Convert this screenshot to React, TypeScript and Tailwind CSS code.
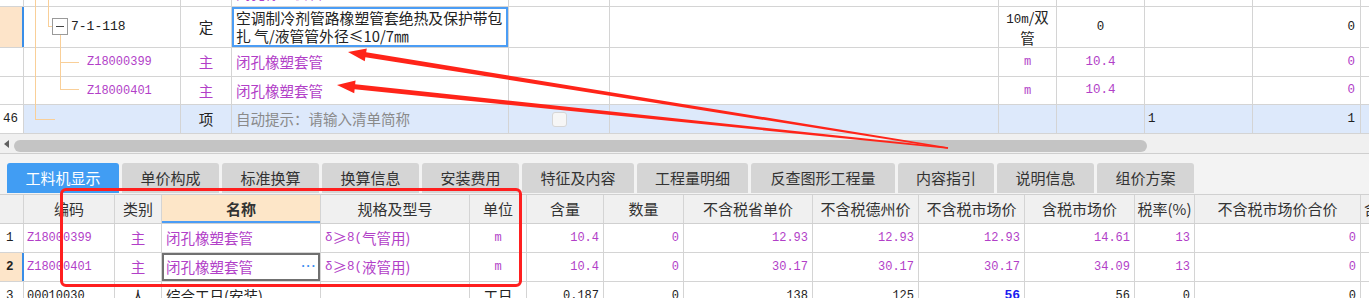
import React from "react";

const P = "text-[#b23fc8]";
const MONO = "font-['Liberation_Mono','Noto_Sans_CJK_SC',monospace]";
const CJK = "font-['Noto_Sans_CJK_SC','Noto_Sans',sans-serif]";

type CP = { w: string; cls?: string; children?: React.ReactNode };
function C({ w, cls = "", children }: CP) {
  return (
    <div
      className={`${w} shrink-0 h-full border-r border-[#d4d4d4] flex items-center overflow-hidden whitespace-nowrap ${cls}`}
    >
      {children}
    </div>
  );
}

const numR = `justify-end pr-[4px] ${MONO} text-[12px]`;
const numRTop = `justify-end pr-[5px] ${MONO} text-[12.5px]`;
const numCTop = `justify-center ${MONO} text-[12.5px]`;

function TreeLines() {
  const c = "#f9cf98";
  return (
    <svg className="absolute left-0 top-0 pointer-events-none" width="200" height="134">
      <line x1="35.5" y1="0" x2="35.5" y2="119.5" stroke={c} strokeWidth="1" />
      <line x1="35" y1="119.5" x2="55" y2="119.5" stroke={c} strokeWidth="1" />
      <line x1="48.5" y1="0" x2="48.5" y2="26.5" stroke={c} strokeWidth="1" />
      <line x1="48" y1="26.5" x2="52" y2="26.5" stroke={c} strokeWidth="1" />
      <rect x="52.5" y="18.5" width="15" height="16" fill="#fff" stroke="#9a9a9a" strokeWidth="1" />
      <line x1="56" y1="26.5" x2="64" y2="26.5" stroke="#444" strokeWidth="1" />
      <line x1="60.5" y1="35" x2="60.5" y2="89.5" stroke={c} strokeWidth="1" />
      <line x1="60" y1="62.5" x2="79" y2="62.5" stroke={c} strokeWidth="1" />
      <line x1="60" y1="89.5" x2="79" y2="89.5" stroke={c} strokeWidth="1" />
    </svg>
  );
}

function TopGrid() {
  return (
    <div className="relative">
      {/* partial row above */}
      <div className="h-[7px] border-b border-[#d4d4d4] overflow-hidden flex flex-col justify-end">
        <div className="h-[27px] shrink-0 flex">
          <C w="w-[24px]" />
          <C w="w-[157px]" />
          <C w="w-[51px]" cls={`justify-center text-[14.5px] ${P}`}>主</C>
          <C w="w-[277px]" cls={`pl-[4px] text-[14.5px] ${P}`}>闭孔橡塑套管</C>
          <C w="w-[101px]" />
          <C w="w-[389px]" />
          <C w="w-[58px]" cls={`justify-center ${MONO} text-[12px] ${P}`}>m</C>
          <C w="w-[88px]" cls={`${numCTop} ${P}`}>10.4</C>
          <C w="w-[108px]" />
          <C w="w-[108px]" cls={`${numRTop} ${P}`}>0</C>
          <div className="flex-1" />
        </div>
      </div>

      {/* 7-1-118 */}
      <div className="h-[41px] border-b border-[#d4d4d4] flex text-[#222]">
        <div className="w-[24px] shrink-0 h-full bg-[#fde4c9] border-r-2 border-[#3a8ee8]" />
        <C w="w-[157px]" cls={`pl-[47px] ${MONO} text-[13px]`}>7-1-118</C>
        <C w="w-[51px]" cls="justify-center text-[14.5px]">定</C>
        <C w="w-[277px]" cls="pl-[4px] shadow-[inset_0_0_0_2px_#4b9df5]">
          <div className="text-[14.8px] leading-[18px] whitespace-normal">
            空调制冷剂管路橡塑管套绝热及保护带包
            <br />
            扎 气/液管管外径≤10/7㎜
          </div>
        </C>
        <C w="w-[101px]" />
        <C w="w-[389px]" />
        <C w="w-[58px]" cls="justify-center">
          <div className="text-[14.5px] leading-[18px] text-center">
            <span className={`${MONO} text-[12.5px]`}>10m</span>/双
            <br />管
          </div>
        </C>
        <C w="w-[88px]" cls={numCTop}>0</C>
        <C w="w-[108px]" />
        <C w="w-[108px]" cls={numRTop}>0</C>
        <div className="flex-1" />
      </div>

      {/* Z18000399 */}
      <div className="h-[29px] border-b border-[#d4d4d4] flex">
        <C w="w-[24px]" />
        <C w="w-[157px]" cls={`pl-[63px] ${MONO} text-[12px] ${P}`}>Z18000399</C>
        <C w="w-[51px]" cls={`justify-center text-[14.5px] ${P}`}>主</C>
        <C w="w-[277px]" cls={`pl-[4px] text-[14.5px] ${P}`}>闭孔橡塑套管</C>
        <C w="w-[101px]" />
        <C w="w-[389px]" />
        <C w="w-[58px]" cls={`justify-center ${MONO} text-[12px] ${P}`}>m</C>
        <C w="w-[88px]" cls={`${numCTop} ${P}`}>10.4</C>
        <C w="w-[108px]" />
        <C w="w-[108px]" cls={`${numRTop} ${P}`}>0</C>
        <div className="flex-1" />
      </div>

      {/* Z18000401 */}
      <div className="h-[28px] border-b border-[#d4d4d4] flex">
        <C w="w-[24px]" />
        <C w="w-[157px]" cls={`pl-[63px] ${MONO} text-[12px] ${P}`}>Z18000401</C>
        <C w="w-[51px]" cls={`justify-center text-[14.5px] ${P}`}>主</C>
        <C w="w-[277px]" cls={`pl-[4px] text-[14.5px] ${P}`}>闭孔橡塑套管</C>
        <C w="w-[101px]" />
        <C w="w-[389px]" />
        <C w="w-[58px]" cls={`justify-center ${MONO} text-[12px] ${P}`}>m</C>
        <C w="w-[88px]" cls={`${numCTop} ${P}`}>10.4</C>
        <C w="w-[108px]" />
        <C w="w-[108px]" cls={`${numRTop} ${P}`}>0</C>
        <div className="flex-1" />
      </div>

      {/* 46 */}
      <div className="h-[29px] border-b border-[#d4d4d4] flex text-[#222]">
        <C w="w-[24px]" cls={`pl-[3px] ${MONO} text-[12.5px] bg-white`}>46</C>
        <div className="flex-1 flex h-full bg-[#dde9fb]">
          <C w="w-[157px]" />
          <C w="w-[51px]" cls="justify-center text-[14.5px]">项</C>
          <C w="w-[277px]" cls="pl-[4px] text-[14.5px] text-[#8a8a8a]">自动提示：请输入清单简称</C>
          <C w="w-[101px]" cls="justify-center">
            <div className="w-[15px] h-[15px] rounded-[3px] bg-[#f6f6f6] border border-[#d6d6d6]" />
          </C>
          <C w="w-[389px]" />
          <C w="w-[58px]" />
          <C w="w-[88px]" />
          <C w="w-[108px]" cls={`pl-[3px] ${MONO} text-[12.5px]`}>1</C>
          <C w="w-[108px]" cls={numRTop}>1</C>
          <div className="flex-1" />
        </div>
      </div>

      <TreeLines />
    </div>
  );
}

function Scrollbar() {
  return (
    <div className="h-[20px] bg-[#f0f0f0] border-b border-[#cfcfcf] flex items-start">
      <div className="w-[14px] h-[19px] flex items-center justify-center">
        <svg width="6" height="8" viewBox="0 0 6 8">
          <path d="M5 0 L0 4 L5 8 Z" fill="#606060" />
        </svg>
      </div>
      <div className="mt-[6px] w-[1133px] h-[12px] rounded-full bg-[#c4c4c4]" />
    </div>
  );
}

const tabs: { label: string; w: string }[] = [
  { label: "单价构成", w: "w-[97px]" },
  { label: "标准换算", w: "w-[97px]" },
  { label: "换算信息", w: "w-[97px]" },
  { label: "安装费用", w: "w-[97px]" },
  { label: "特征及内容", w: "w-[112px]" },
  { label: "工程量明细", w: "w-[111px]" },
  { label: "反查图形工程量", w: "w-[144px]" },
  { label: "内容指引", w: "w-[96px]" },
  { label: "说明信息", w: "w-[97px]" },
  { label: "组价方案", w: "w-[97px]" },
];

function Tabs() {
  return (
    <div className="h-[40px] bg-[#f3f3f3] pt-[9px] pl-[7px] flex gap-[3px]">
      <div className="w-[112px] h-[30px] rounded-t-[3px] bg-[#419df3] text-white text-[15px] flex items-center justify-center">
        工料机显示
      </div>
      {tabs.map((t) => (
        <div
          key={t.label}
          className={`${t.w} h-[30px] rounded-t-[3px] bg-[#d5d5d5] text-[#333] text-[15px] flex items-center justify-center`}
        >
          {t.label}
        </div>
      ))}
    </div>
  );
}

function BottomGrid() {
  const h = "justify-center text-[15px] text-[#333]";
  return (
    <div>
      {/* header */}
      <div className="h-[30px] border-t border-b border-[#d0d0d0] bg-[#f0f0f0] flex">
        <C w="w-[24px]" />
        <C w="w-[91px]" cls={h}>编码</C>
        <C w="w-[47px]" cls={h}>类别</C>
        <C w="w-[159px]" cls={`${h} font-bold bg-[#fde6c8] shadow-[inset_0_-2px_0_#4a9cf5]`}>名称</C>
        <C w="w-[149px]" cls={h}>规格及型号</C>
        <C w="w-[57px]" cls={h}>单位</C>
        <C w="w-[77px]" cls={h}>含量</C>
        <C w="w-[80px]" cls={h}>数量</C>
        <C w="w-[129px]" cls={h}>不含税省单价</C>
        <C w="w-[106px]" cls={h}>不含税德州价</C>
        <C w="w-[106px]" cls={h}>不含税市场价</C>
        <C w="w-[110px]" cls={h}>含税市场价</C>
        <C w="w-[60px]" cls={h}>税率(%)</C>
        <C w="w-[166px]" cls={h}>不含税市场价合价</C>
        <div className="flex-1 flex items-center pl-[3px] text-[15px] text-[#333] overflow-hidden whitespace-nowrap">含税</div>
      </div>

      {/* row 1 */}
      <div className="h-[29px] border-b border-[#d4d4d4] flex">
        <C w="w-[24px]" cls={`pl-[6px] ${MONO} text-[12.5px] text-[#222]`}>1</C>
        <C w="w-[91px]" cls={`pl-[3px] ${MONO} text-[12px] ${P}`}>Z18000399</C>
        <C w="w-[47px]" cls={`justify-center text-[14.5px] ${P}`}>主</C>
        <C w="w-[159px]" cls={`pl-[4px] text-[14.5px] ${P}`}>闭孔橡塑套管</C>
        <C w="w-[149px]" cls={`pl-[4px] text-[14.5px] ${P}`}>
          <span className={`${MONO} text-[12.5px]`}>δ</span>≥<span className={`${MONO} text-[12.5px]`}>8(</span>气管用)
        </C>
        <C w="w-[57px]" cls={`justify-center ${MONO} text-[12px] ${P}`}>m</C>
        <C w="w-[77px]" cls={`${numR} ${P}`}>10.4</C>
        <C w="w-[80px]" cls={`${numR} ${P}`}>0</C>
        <C w="w-[129px]" cls={`${numR} ${P}`}>12.93</C>
        <C w="w-[106px]" cls={`${numR} ${P}`}>12.93</C>
        <C w="w-[106px]" cls={`${numR} ${P}`}>12.93</C>
        <C w="w-[110px]" cls={`${numR} ${P}`}>14.61</C>
        <C w="w-[60px]" cls={`${numR} ${P}`}>13</C>
        <C w="w-[166px]" cls={`${numR} ${P}`}>0</C>
        <div className="flex-1" />
      </div>

      {/* row 2 */}
      <div className="h-[29px] border-b border-[#d4d4d4] flex">
        <div className={`w-[24px] shrink-0 h-full bg-[#fde5c9] border-r-2 border-[#3a8ee8] flex items-center pl-[6px] ${MONO} text-[12.5px] font-bold text-[#222]`}>
          2
        </div>
        <C w="w-[91px]" cls={`pl-[3px] ${MONO} text-[12px] ${P}`}>Z18000401</C>
        <C w="w-[47px]" cls={`justify-center text-[14.5px] ${P}`}>主</C>
        <C w="w-[159px]" cls={`pl-[4px] pr-[5px] justify-between text-[14.5px] ${P} shadow-[inset_0_0_0_2px_#707070]`}>
          <span>闭孔橡塑套管</span>
          <span className={`text-[#3c8ef0] text-[12px] ${MONO} tracking-[-2px] font-bold`}>···</span>
        </C>
        <C w="w-[149px]" cls={`pl-[4px] text-[14.5px] ${P}`}>
          <span className={`${MONO} text-[12.5px]`}>δ</span>≥<span className={`${MONO} text-[12.5px]`}>8(</span>液管用)
        </C>
        <C w="w-[57px]" cls={`justify-center ${MONO} text-[12px] ${P}`}>m</C>
        <C w="w-[77px]" cls={`${numR} ${P}`}>10.4</C>
        <C w="w-[80px]" cls={`${numR} ${P}`}>0</C>
        <C w="w-[129px]" cls={`${numR} ${P}`}>30.17</C>
        <C w="w-[106px]" cls={`${numR} ${P}`}>30.17</C>
        <C w="w-[106px]" cls={`${numR} ${P}`}>30.17</C>
        <C w="w-[110px]" cls={`${numR} ${P}`}>34.09</C>
        <C w="w-[60px]" cls={`${numR} ${P}`}>13</C>
        <C w="w-[166px]" cls={`${numR} ${P}`}>0</C>
        <div className="flex-1" />
      </div>

      {/* row 3 */}
      <div className="h-[29px] border-b border-[#d4d4d4] flex text-[#222]">
        <C w="w-[24px]" cls={`pl-[6px] ${MONO} text-[12.5px]`}>3</C>
        <C w="w-[91px]" cls={`pl-[3px] ${MONO} text-[12px]`}>00010030</C>
        <C w="w-[47px]" cls="justify-center text-[14.5px]">人</C>
        <C w="w-[159px]" cls="pl-[4px] text-[14.5px]">综合工日(安装)</C>
        <C w="w-[149px]" />
        <C w="w-[57px]" cls="justify-center text-[14.5px]">工日</C>
        <C w="w-[77px]" cls={numR}>0.187</C>
        <C w="w-[80px]" cls={numR}>0</C>
        <C w="w-[129px]" cls={numR}>138</C>
        <C w="w-[106px]" cls={numR}>125</C>
        <C w="w-[106px]" cls={`${numR} font-bold text-[#1b1bf0] text-[13px]`}>56</C>
        <C w="w-[110px]" cls={numR}>56</C>
        <C w="w-[60px]" cls={numR}>0</C>
        <C w="w-[166px]" cls={numR}>0</C>
        <div className="flex-1" />
      </div>
    </div>
  );
}

function Arrows() {
  const red = "#ff2419";
  return (
    <svg className="absolute left-0 top-0 pointer-events-none" width="1369" height="298">
      <polygon
        points="348,52 366.81,48.42 366.18,52.37 948.1,147.2 947.9,148.8 365.39,57.31 364.75,61.26"
        fill={red}
      />
      <polygon
        points="337,85 355.57,80.38 355.16,84.36 948.08,147.2 947.92,148.8 354.64,89.34 354.23,93.32"
        fill={red}
      />
    </svg>
  );
}

export default function App() {
  return (
    <div className={`relative w-[1369px] h-[298px] overflow-hidden bg-white ${CJK}`}>
      <TopGrid />
      <Scrollbar />
      <Tabs />
      <BottomGrid />
      <div className="absolute left-[60px] top-[188px] w-[462px] h-[99px] border-[3px] border-[#ff1f1f] rounded-[6px] pointer-events-none" />
      <Arrows />
    </div>
  );
}
